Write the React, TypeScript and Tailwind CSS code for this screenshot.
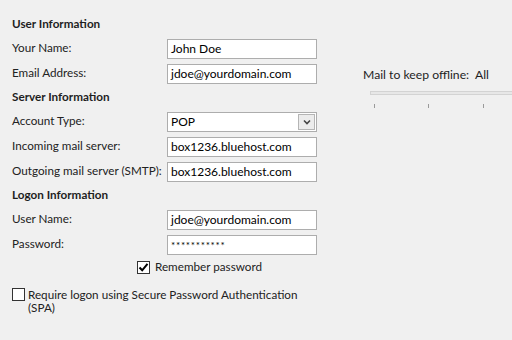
import React from 'react';

const font = { fontFamily: 'Lato, "Noto Sans", sans-serif' };

function Heading({ children }: { children: React.ReactNode }) {
  return <div className="h-[18px] leading-[18px] font-bold text-[11.7px] text-[#1e1e1e] whitespace-nowrap">{children}</div>;
}

function Row({ label, children }: { label: string; children: React.ReactNode }) {
  return (
    <div className="flex h-[25px] items-start">
      <div className="w-[155px] leading-[20px] text-[11.7px] text-[#222] whitespace-nowrap">{label}</div>
      <div className="mt-[2px]">{children}</div>
    </div>
  );
}

function Field({ value, small }: { value: string; small?: boolean }) {
  return (
    <div
      className={`w-[150px] h-[20px] bg-white border border-[#adadad] pl-[3px] flex items-center text-black whitespace-nowrap ${
        small ? 'text-[10px] tracking-[0.7px]' : 'text-[12px]'
      }`}
    >
      {value}
    </div>
  );
}

function Select({ value }: { value: string }) {
  return (
    <div className="w-[150px] h-[20px] bg-white border border-[#adadad] pl-[3px] flex items-center justify-between text-[12px] text-black">
      <span>{value}</span>
      <div className="w-[17px] h-[16px] mr-[1px] bg-[#ececec] border border-[#b5b5b5] flex items-center justify-center">
        <svg width="8" height="6" viewBox="0 0 8 6">
          <path d="M1 1.5 L4 4.5 L7 1.5" stroke="#444" strokeWidth="1.6" fill="none" />
        </svg>
      </div>
    </div>
  );
}

function CheckBox({ checked }: { checked?: boolean }) {
  return (
    <div className="w-[13px] h-[13px] bg-white border border-[#333] flex items-center justify-center shrink-0">
      {checked && (
        <svg width="11" height="11" viewBox="0 0 11 11">
          <path d="M1.5 5.5 L4.2 8.3 L9.5 1.8" stroke="#000" strokeWidth="2" fill="none" />
        </svg>
      )}
    </div>
  );
}

export default function App() {
  return (
    <div className="w-[512px] h-[340px] bg-[#f0f0f0] flex overflow-hidden" style={font}>
      <div className="w-[330px] shrink-0 pl-[12px] pt-[14px]">
        <Heading>User Information</Heading>
        <div className="mt-[5px]">
          <Row label="Your Name:"><Field value="John Doe" /></Row>
          <Row label="Email Address:"><Field value="jdoe@yourdomain.com" /></Row>
        </div>
        <Heading>Server Information</Heading>
        <div className="mt-[5px]">
          <Row label="Account Type:"><Select value="POP" /></Row>
          <Row label="Incoming mail server:"><Field value="box1236.bluehost.com" /></Row>
          <Row label="Outgoing mail server (SMTP):"><Field value="box1236.bluehost.com" /></Row>
        </div>
        <Heading>Logon Information</Heading>
        <div className="mt-[5px]">
          <Row label="User Name:"><Field value="jdoe@yourdomain.com" /></Row>
          <Row label="Password:"><Field value="***********" small /></Row>
        </div>
        <div className="flex items-center gap-[5px] h-[18px] pl-[125px] text-[11.7px] text-[#222]">
          <CheckBox checked />
          <span>Remember password</span>
        </div>
        <div className="flex items-start gap-[3px] mt-[12px] text-[11.7px] leading-[13px] text-[#222]">
          <CheckBox />
          <span className="whitespace-nowrap">
            Require logon using Secure Password Authentication
            <br />
            (SPA)
          </span>
        </div>
      </div>
      <div className="flex-1 pl-[33px] pt-[67px]">
        <div className="h-[16px] leading-[16px] text-[12.2px] text-[#1e1e1e] whitespace-nowrap">
          Mail to keep offline:&nbsp;&nbsp;All
        </div>
        <div className="ml-[7px] mt-[8px] h-[4px] bg-[#e7e7e7] border border-[#d3d3d3] border-r-0" />
        <div className="flex ml-[7px] mt-[9px] h-[4px]">
          <div className="ml-[4px] w-px h-full bg-[#9a9a9a]" />
          <div className="ml-[53px] w-px h-full bg-[#9a9a9a]" />
          <div className="ml-[54px] w-px h-full bg-[#9a9a9a]" />
        </div>
      </div>
    </div>
  );
}
